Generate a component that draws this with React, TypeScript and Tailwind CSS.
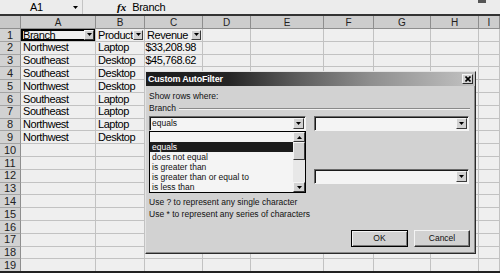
import React from "react";

const letters = ["A", "B", "C", "D", "E", "F", "G", "H", "I"];

const data: string[][] = [
  ["Branch", "Product", "Revenue"],
  ["Northwest", "Laptop", "$33,208.98"],
  ["Southeast", "Desktop", "$45,768.62"],
  ["Southeast", "Desktop"],
  ["Northwest", "Desktop"],
  ["Southeast", "Laptop"],
  ["Southeast", "Laptop"],
  ["Northwest", "Laptop"],
  ["Northwest", "Desktop"],
];

const listItems = [
  "",
  "equals",
  "does not equal",
  "is greater than",
  "is greater than or equal to",
  "is less than",
];

function Tri({ up = false }: { up?: boolean }) {
  return (
    <svg width="5" height="3" viewBox="0 0 5 3" className="block">
      {up ? <polygon points="0,3 5,3 2.5,0" fill="#000" /> : <polygon points="0,0 5,0 2.5,3" fill="#000" />}
    </svg>
  );
}

function FilterBtn() {
  return (
    <span className="ml-auto mr-[1px] flex h-[10px] w-[10px] shrink-0 items-center justify-center border border-t-[#f4f4f4] border-l-[#f4f4f4] border-r-[#3a3a3a] border-b-[#3a3a3a] bg-[#cfcfcf]">
      <Tri />
    </span>
  );
}

function DropBtn() {
  return (
    <span className="my-[1px] mr-[1px] flex w-[11px] shrink-0 items-center justify-center border border-t-[#f4f4f4] border-l-[#f4f4f4] border-r-[#3a3a3a] border-b-[#3a3a3a] bg-[#d2d2d2]">
      <Tri />
    </span>
  );
}

function Combo({ w, value }: { w: string; value?: string }) {
  return (
    <div
      className={`flex h-[15px] ${w} shrink-0 items-stretch border border-t-[#6a6a6a] border-l-[#6a6a6a] border-r-[#f4f4f4] border-b-[#f4f4f4] bg-[#f4f4f4] shadow-[inset_1px_1px_0_#1a1a1a]`}
    >
      <span className="flex-1 pl-[2px] pt-[1px] leading-[11px]">{value}</span>
      <DropBtn />
    </div>
  );
}

function ScrollBtn({ up }: { up?: boolean }) {
  return (
    <div className="flex h-[10px] items-center justify-center border border-t-[#f4f4f4] border-l-[#f4f4f4] border-r-[#3a3a3a] border-b-[#3a3a3a] bg-[#d2d2d2]">
      <Tri up={up} />
    </div>
  );
}

function Dialog() {
  return (
    <div className="absolute left-[145px] top-[71px] z-10 flex h-[183px] w-[331px] flex-col border border-t-[#e4e4e4] border-l-[#e4e4e4] border-r-[#2a2a2a] border-b-[#2a2a2a] bg-[#d2d2d2] text-[8.5px] leading-[11px] text-[#111] shadow-[inset_-1px_-1px_0_#8a8a8a]">
      <div className="flex h-[14px] shrink-0 items-center bg-[linear-gradient(to_right,#1c1c1c_0%,#242424_25%,#5a5a5a_45%,#8e8e8e_68%,#c2c2c2_100%)] pl-[2px] pr-[2px]">
        <span className="text-[9px] font-bold tracking-[-0.2px] text-white">Custom AutoFilter</span>
        <span className="ml-auto flex h-[10px] w-[11px] items-center justify-center border border-t-[#f4f4f4] border-l-[#f4f4f4] border-r-[#2a2a2a] border-b-[#2a2a2a] bg-[#d2d2d2]">
          <svg width="6" height="6" viewBox="0 0 6 6" className="block">
            <path d="M0.5 0.5 L5.5 5.5 M5.5 0.5 L0.5 5.5" stroke="#000" strokeWidth="1.6" />
          </svg>
        </span>
      </div>
      <div className="flex flex-1 flex-col pl-[3px] pr-[5px] pt-[4px]">
        <div className="flex h-[12px] items-center">Show rows where:</div>
        <div className="flex h-[13px] items-center gap-[3px]">
          <span>Branch</span>
          <span className="h-[2px] flex-1 border-t border-b border-t-[#8a8a8a] border-b-[#f2f2f2]" />
        </div>
        <div className="mt-[1px] flex gap-[8px]">
          <Combo w="w-[157px]" value="equals" />
          <Combo w="w-[155px]" />
        </div>
        <div className="h-[38px]" />
        <div className="flex gap-[8px]">
          <Combo w="w-[157px]" />
          <Combo w="w-[155px]" />
        </div>
        <div className="mt-[12px] flex h-[12px] items-center">Use ? to represent any single character</div>
        <div className="flex h-[12px] items-center">Use * to represent any series of characters</div>
        <div className="mt-[10px] flex justify-end gap-[6px]">
          <button className="flex h-[17px] w-[57px] items-center justify-center border border-black bg-[#d2d2d2] shadow-[inset_1px_1px_0_#f4f4f4,inset_-1px_-1px_0_#7a7a7a]">
            OK
          </button>
          <button className="flex h-[17px] w-[56px] items-center justify-center border border-t-[#f4f4f4] border-l-[#f4f4f4] border-r-[#2a2a2a] border-b-[#2a2a2a] bg-[#d2d2d2] shadow-[inset_-1px_-1px_0_#7a7a7a]">
            Cancel
          </button>
        </div>
      </div>
      <div className="absolute left-[3px] top-[59px] z-20 flex h-[62px] w-[157px] border border-black bg-[#f4f4f4]">
        <div className="flex flex-1 flex-col">
          {listItems.map((t, i) => (
            <div
              key={i}
              className={
                i === 1
                  ? "h-[10px] bg-[#1c1c1c] pl-[2px] leading-[10px] text-white"
                  : "h-[10px] pl-[2px] leading-[10px]"
              }
            >
              {t}
            </div>
          ))}
        </div>
        <div className="flex w-[12px] flex-col bg-[#e8e8e8]">
          <ScrollBtn up />
          <div className="h-[18px] border border-t-[#f4f4f4] border-l-[#f4f4f4] border-r-[#3a3a3a] border-b-[#3a3a3a] bg-[#d2d2d2]" />
          <div className="flex-1" />
          <ScrollBtn />
        </div>
      </div>
    </div>
  );
}

export default function App() {
  const rows = Array.from({ length: 19 }, (_, i) => i + 1);
  return (
    <div className="relative h-[273px] w-[500px] overflow-hidden border-b-2 border-[#222] bg-[#efefef] font-['Liberation_Sans',Arial,sans-serif] text-black">
      {/* formula bar */}
      <div className="flex h-[16px] border-b-2 border-[#333] bg-[#ececec] text-[11px]">
        <div className="flex w-[83px] items-center border-r border-[#c4c4c4]">
          <span className="ml-[30px] tracking-[-0.3px]">A1</span>
          <span className="ml-auto mr-[4px]">
            <Tri />
          </span>
        </div>
        <span className="ml-[34px] flex items-center font-['Liberation_Serif',serif] text-[11px] font-bold italic">fx</span>
        <span className="ml-[6px] flex items-center tracking-[-0.3px]">Branch</span>
        <span className="ml-auto mr-[14px] h-[3px] w-[8px] self-start bg-[#555]" />
      </div>
      {/* grid */}
      <div className="grid grid-cols-[21px_75px_49px_58px_48px_73px_50px_57px_48px_1fr] text-[11px]">
        <div className="h-[13px] border-r border-b border-[#8e8e8e] bg-[#c8c8c8]" />
        {letters.map((l) => (
          <div
            key={l}
            className="flex h-[13px] items-center justify-center border-r border-b border-[#8e8e8e] bg-[#cdcdcd] text-[10px] text-[#222]"
          >
            {l}
          </div>
        ))}
        {rows.map((r) => {
          const rd = data[r - 1] || [];
          return (
            <React.Fragment key={r}>
              <div className="flex h-[12.8px] items-center justify-center border-r border-b border-r-[#8e8e8e] border-b-[#a4a4a4] bg-[#d2d2d2] text-[#222]">
                {r}
              </div>
              {letters.map((l, ci) => {
                const v = rd[ci] || "";
                const isHeader = r === 1 && ci < 3;
                const isA1 = r === 1 && ci === 0;
                const right = ci === 2 && r > 1;
                return (
                  <div
                    key={l}
                    className={`flex h-[12.8px] items-center overflow-hidden whitespace-nowrap border-r border-b border-[#c2c2c2] tracking-[-0.45px] ${
                      right ? "justify-end pr-[6px]" : "pl-[2px]"
                    } ${isA1 ? "shadow-[inset_0_0_0_2px_#000]" : ""}`}
                  >
                    {v && <span>{v}</span>}
                    {isHeader && <FilterBtn />}
                  </div>
                );
              })}
            </React.Fragment>
          );
        })}
      </div>
      <Dialog />
    </div>
  );
}
